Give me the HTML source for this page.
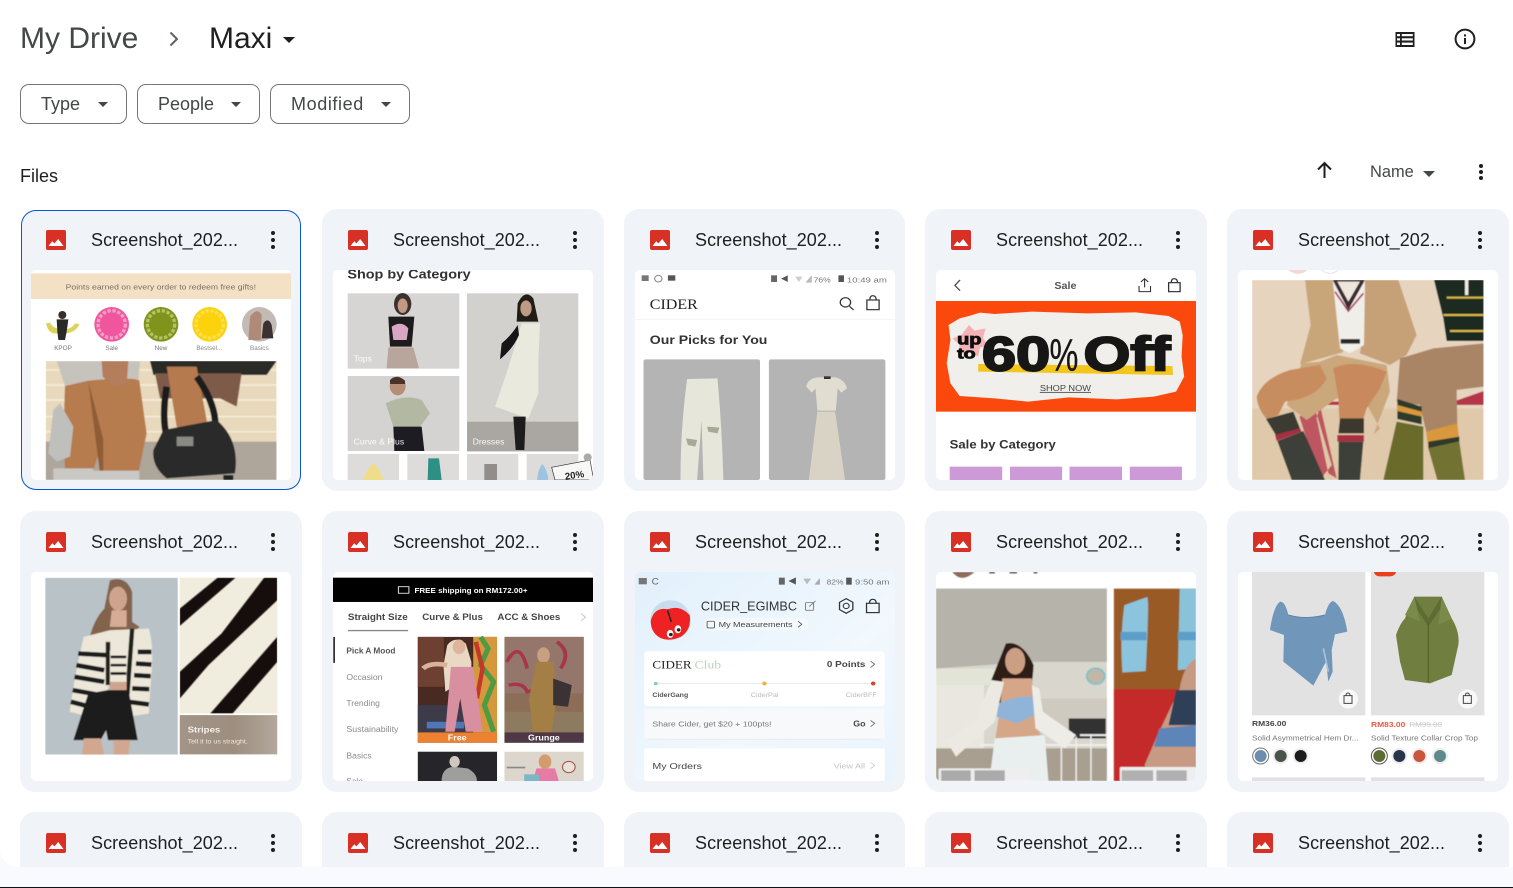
<!DOCTYPE html>
<html lang="en"><head><meta charset="utf-8"><title>Maxi - Google Drive</title>
<style>
html,body{margin:0;padding:0;width:1513px;height:888px;overflow:hidden;background:#f8fafd;font-family:"Liberation Sans",sans-serif}
#main{position:absolute;left:0;top:0;width:1513px;height:867px;background:#fff;overflow:hidden;border-bottom-left-radius:18px}
#line{position:absolute;left:0;top:887px;width:1513px;height:1px;background:#111}
.a{position:absolute;white-space:nowrap}
.chip{position:absolute;top:84px;height:38px;border:1px solid #747775;border-radius:9px;color:#444746;font-size:18px;line-height:38px;box-sizing:content-box}
.chip span{position:absolute;left:20px;top:0}
.tri{position:absolute;width:0;height:0;border-left:5px solid transparent;border-right:5px solid transparent;border-top:5px solid #444746}
.card{position:absolute;width:282px;height:282px;background:#f0f4f9;border-radius:15px;overflow:hidden}
.card.sel{box-shadow:inset 0 0 0 1px #0b57d0;left:21px!important;width:280px;margin-top:1px;height:280px}
.card b{position:absolute;left:71px;top:20px;font-weight:400;font-size:18px;line-height:22px;color:#1f1f1f;letter-spacing:.06px;white-space:nowrap}
.card.sel b{left:70px;top:19px}
.card .ic{position:absolute;left:26px;top:21px;width:20px;height:20px}
.card.sel .ic{left:25px;top:20px}
.card .kb{position:absolute;left:251px;top:21px;width:4px;height:20px}
.card.sel .kb{left:250px;top:20px}
.th{position:absolute;left:11px;top:61px;width:260px;height:210px;background:#fff;border-radius:5px;overflow:hidden}
.card.sel .th{left:10px;top:60px}
.r2{height:281px}
.r3{height:55px;border-radius:15px 15px 0 0}
.r2 .th{height:209px}
.th>svg{display:block;width:100%;height:100%}
svg text{font-family:"Liberation Sans",sans-serif}
</style></head><body>
<svg width="0" height="0" style="position:absolute"><defs>
<symbol id="img" viewBox="0 0 20 20"><rect width="20" height="20" rx="2" fill="#d93025"/><path d="M2.5 16 L6.2 11.2 L8.4 13.4 L12.2 9 L17.5 16Z" fill="#fff"/></symbol>
<symbol id="kb" viewBox="0 0 4 20"><circle cx="2" cy="3" r="2" fill="#1f1f1f"/><circle cx="2" cy="10" r="2" fill="#1f1f1f"/><circle cx="2" cy="17" r="2" fill="#1f1f1f"/></symbol>
<filter id="b" x="-5%" y="-5%" width="110%" height="110%"><feGaussianBlur stdDeviation="1.6"/></filter>
<filter id="t" x="-5%" y="-5%" width="110%" height="110%"><feGaussianBlur stdDeviation=".7"/></filter>
<linearGradient id="gs" x1="0" x2="1"><stop offset="0" stop-color="#a29486"/><stop offset=".55" stop-color="#9d8e80"/><stop offset="1" stop-color="#b2a89c"/></linearGradient>
<linearGradient id="gp" x1="0" y1="0" x2="1" y2="1"><stop offset="0" stop-color="#e2f0fb"/><stop offset=".6" stop-color="#f1f8fe"/><stop offset="1" stop-color="#eaf4fd"/></linearGradient>
</defs></svg>

<div id="main">
<div class="a" style="left:20px;top:21px;font-size:30px;line-height:36px;color:#444746">My Drive</div>
<svg class="a" style="left:166px;top:29px" width="16" height="20" viewBox="0 0 16 20"><path d="M4.5 3.5 L11 10 L4.5 16.5" fill="none" stroke="#5f6368" stroke-width="2"/></svg>
<div class="a" style="left:209px;top:21px;font-size:30px;line-height:36px;color:#1f1f1f">Maxi</div>
<div class="tri" style="left:283px;top:37px;border-left-width:6px;border-right-width:6px;border-top:6px solid #1f1f1f"></div>

<svg class="a" style="left:1395px;top:31px" width="20" height="16" viewBox="0 0 20 16"><rect x=".5" y="1" width="19" height="15" fill="#1f1f1f"/><rect x="2" y="3" width="3" height="2.2" fill="#fff"/><rect x="2" y="7.3" width="3" height="2.2" fill="#fff"/><rect x="2" y="11.6" width="3" height="2.4" fill="#fff"/><rect x="6.8" y="3" width="11" height="2.2" fill="#fff"/><rect x="6.8" y="7.3" width="11" height="2.2" fill="#fff"/><rect x="6.8" y="11.6" width="11" height="2.4" fill="#fff"/></svg>
<svg class="a" style="left:1454px;top:28px" width="22" height="22" viewBox="0 0 22 22"><circle cx="11" cy="11" r="9.4" fill="none" stroke="#1f1f1f" stroke-width="2"/><rect x="10" y="10" width="2" height="6" fill="#1f1f1f"/><rect x="10" y="6.4" width="2" height="2" fill="#1f1f1f"/></svg>

<div class="chip" style="left:20px;width:105px"><span>Type</span><i class="tri" style="left:77px;top:17px"></i></div>
<div class="chip" style="left:137px;width:121px"><span>People</span><i class="tri" style="left:93px;top:17px"></i></div>
<div class="chip" style="left:270px;width:138px"><span style="letter-spacing:.6px">Modified</span><i class="tri" style="left:110px;top:17px"></i></div>

<div class="a" style="left:20px;top:165px;font-size:18px;line-height:22px;color:#1f1f1f">Files</div>
<svg class="a" style="left:1316px;top:161px" width="17" height="18" viewBox="0 0 17 18"><path d="M8.5 17 V2 M2 8.5 L8.5 2 L15 8.5" fill="none" stroke="#1f1f1f" stroke-width="2"/></svg>
<div class="a" style="left:1370px;top:162px;font-size:16.4px;line-height:20px;color:#444746">Name</div>
<div class="tri" style="left:1423px;top:171px;border-left-width:6px;border-right-width:6px;border-top:6px solid #444746"></div>
<svg class="a" style="left:1479px;top:163px;width:4px;height:18px"><circle cx="2" cy="3" r="2" fill="#1f1f1f"/><circle cx="2" cy="9" r="2" fill="#1f1f1f"/><circle cx="2" cy="15" r="2" fill="#1f1f1f"/></svg>

<!-- ROW 1 -->
<div class="card sel" style="left:20px;top:209px"><svg class="ic"><use href="#img"/></svg><b>Screenshot_202...</b><svg class="kb"><use href="#kb"/></svg>
<div class="th"><svg viewBox="33 30 780 630" preserveAspectRatio="none">
<rect x="33" y="40" width="780" height="77" fill="#f3e0c5"/>
<g filter="url(#t)">
<text x="137" y="88" font-size="22" fill="#7a6f66" textLength="571" lengthAdjust="spacingAndGlyphs">Points earned on every order to redeem free gifts!</text>
<path d="M78 190 Q85 225 115 220 L140 220 Q170 215 178 192 L165 190 Q155 208 130 208 Q100 208 90 188Z" fill="#dcd35a"/>
<circle cx="127" cy="165" r="12" fill="#3a2f2a"/><path d="M110 178 H145 L140 215 L135 240 H115 L112 215Z" fill="#2c2a26"/>
<circle cx="275" cy="193" r="52" fill="#f0569e"/><circle cx="275" cy="193" r="41" fill="none" stroke="#fbd0e3" stroke-width="10" stroke-dasharray="10 5" opacity=".6"/>
<circle cx="423" cy="193" r="52" fill="#80941a"/><circle cx="423" cy="193" r="41" fill="none" stroke="#dfe6a8" stroke-width="10" stroke-dasharray="10 5" opacity=".55"/>
<circle cx="569" cy="193" r="52" fill="#fcd20a"/><circle cx="569" cy="193" r="41" fill="none" stroke="#fde97a" stroke-width="10" stroke-dasharray="10 5" opacity=".6"/>
<circle cx="718" cy="193" r="52" fill="#c3bab6"/><path d="M690 170 Q712 140 725 165 L722 240 H685Z" fill="#b08a78"/><path d="M730 190 Q745 170 755 195 L760 235 H725Z" fill="#3d3230"/>
<text x="129" y="270" font-size="19" fill="#777" text-anchor="middle">KPOP</text>
<text x="275" y="270" font-size="19" fill="#777" text-anchor="middle">Sale</text>
<text x="423" y="270" font-size="19" fill="#777" text-anchor="middle">New</text>
<text x="568" y="270" font-size="19" fill="#888" text-anchor="middle">Bestsel...</text>
<text x="718" y="270" font-size="19" fill="#888" text-anchor="middle">Basics</text>
</g>
<svg x="77" y="303" width="693" height="357" viewBox="77 303 693 357">
<g filter="url(#b)">
<rect x="77" y="303" width="693" height="357" fill="#e8d8bc"/>
<path d="M77 330H770M77 375H770M77 420H770M77 470H770M77 515H770" stroke="#f5ecd8" stroke-width="5"/>
<rect x="77" y="545" width="693" height="115" fill="#aea69a"/>
<path d="M110 303 H360 L355 365 Q280 355 205 365 L135 378Z" fill="#c6c3bd"/>
<path d="M135 378 L205 362 Q340 350 358 362 L380 520 L355 640 H250 L250 540 L220 630 H135 Q130 480 135 378Z" fill="#b67b4e"/>
<path d="M205 365 L240 640 L250 640 L250 540Z" fill="#8f5b36"/>
<path d="M245 303 H325 L320 375 L280 378 L248 350Z" fill="#b47d5b"/>
<path d="M100 625 H220 V660 H100Z M220 632 H358 V660 H220Z" fill="#c9c8c4"/>
<path d="M100 450 L120 430 L160 500 L150 590 L110 605 L85 580Z" fill="#bfbfbc"/>
<path d="M390 303 H770 L740 345 H400Z" fill="#2a2a28"/>
<path d="M405 340 H665 L650 440 L600 415 H420Z" fill="#7e5a48"/>
<path d="M440 320 H530 L560 480 Q565 530 500 520 L470 500Z" fill="#b57a4d"/>
<path d="M440 380 Q425 470 440 530 M530 350 Q595 440 585 520" fill="none" stroke="#1e1e1c" stroke-width="20"/>
<path d="M430 510 L590 480 Q660 540 645 640 L440 655 Q395 620 400 570Z" fill="#2a2b2a"/>
<rect x="470" y="530" width="50" height="28" fill="#8a8a84"/>
<rect x="610" y="645" width="30" height="15" fill="#222"/>
</g></svg>
</svg></div></div>

<div class="card" style="left:322px;top:209px"><svg class="ic"><use href="#img"/></svg><b>Screenshot_202...</b><svg class="kb"><use href="#kb"/></svg>
<div class="th"><svg viewBox="24 30 780 630" preserveAspectRatio="none"><g filter="url(#t)">
<text x="67" y="55" font-size="40" font-weight="700" fill="#333" textLength="370" lengthAdjust="spacingAndGlyphs">Shop by Category</text>
<rect x="68" y="100" width="335" height="226" fill="#d7d5d3"/><rect x="68" y="348" width="335" height="225" fill="#d5d3d1"/><rect x="426" y="100" width="334" height="474" fill="#d3d1ce"/><rect x="426" y="485" width="334" height="89" fill="#aaa7a2"/>
<rect x="68" y="582" width="154" height="78" fill="#dddcda"/><rect x="247" y="582" width="155" height="78" fill="#dddcda"/><rect x="426" y="582" width="154" height="78" fill="#dddcda"/><rect x="605" y="582" width="155" height="78" fill="#dddcda"/>
<ellipse cx="233" cy="132" rx="26" ry="33" fill="#3a322d"/><ellipse cx="233" cy="137" rx="15" ry="22" fill="#c29a84"/>
<path d="M190 170 H268 L260 260 H195Z" fill="#1f1d1d"/><path d="M200 200 Q230 180 250 205 L245 240 H205Z" fill="#d9a7c4"/><path d="M190 262 H265 L282 325 H185Z" fill="#b8a59c"/>
<ellipse cx="218" cy="378" rx="24" ry="28" fill="#b58e78"/><path d="M195 360 Q215 340 240 362 L240 372 H195Z" fill="#4a3328"/>
<path d="M182 430 Q240 400 290 420 L315 460 L285 500 H205Z" fill="#b3b8a3"/><path d="M205 500 H290 L298 573 H208Z" fill="#1f1f23"/>
<path d="M578 130 Q600 85 625 115 L640 185 H575Z" fill="#211a18"/><ellipse cx="603" cy="145" rx="17" ry="24" fill="#bf9a85"/>
<path d="M590 190 H645 L640 300 L640 400 L610 475 L510 440 Q545 340 560 290Z" fill="#e9e9dd"/>
<path d="M578 195 Q560 225 530 250 L525 298 Q565 265 582 225Z" fill="#141414"/>
<path d="M565 470 H602 L598 570 H572Z" fill="#1c1c1c"/>
<text x="86" y="305" font-size="26" fill="#fff" opacity=".9">Tops</text><text x="86" y="553" font-size="26" fill="#fff" opacity=".9">Curve &amp; Plus</text><text x="443" y="553" font-size="26" fill="#fff" opacity=".9">Dresses</text>
<path d="M115 660 Q125 625 145 610 Q165 625 175 660Z" fill="#f0dd8c"/><path d="M310 595 H342 L350 660 H308Z" fill="#2f8f85"/><rect x="478" y="612" width="38" height="48" fill="#908d8a"/><path d="M636 660 Q640 625 652 612 Q668 630 670 660Z" fill="#9cc4e0"/>
<path d="M680 622 L795 600 L806 660 H690Z" fill="#f7f7f5" stroke="#333" stroke-width="2"/><circle cx="788" cy="592" r="12" fill="#aaa"/>
<text x="720" y="655" font-size="29" font-weight="700" fill="#222" transform="rotate(-8 750 650)">20%</text>
</g></svg></div></div>

<div class="card" style="left:624px;top:209px;width:281px"><svg class="ic"><use href="#img"/></svg><b>Screenshot_202...</b><svg class="kb"><use href="#kb"/></svg>
<div class="th"><svg viewBox="27 30 703 630" preserveAspectRatio="none"><g filter="url(#t)">
<rect x="45" y="46" width="19" height="17" fill="#777"/><circle cx="90" cy="56" r="10" fill="none" stroke="#888" stroke-width="3"/><rect x="116" y="46" width="20" height="16" fill="#555"/>
<rect x="395" y="46" width="16" height="20" fill="#666"/><path d="M422 56 L440 46 V66Z" fill="#555"/><path d="M460 50 H480 L470 66Z" fill="#ccc"/><path d="M488 68 L505 45 V68Z" fill="#bbb"/>
<text x="510" y="67" font-size="23" fill="#777">76%</text><rect x="577" y="46" width="15" height="20" fill="#555"/><text x="600" y="67" font-size="23" fill="#777" textLength="108" lengthAdjust="spacingAndGlyphs">10:49 am</text>
<text x="67" y="147" font-size="43" fill="#222" style="font-family:'Liberation Serif',serif" textLength="130" lengthAdjust="spacingAndGlyphs">CIDER</text>
<circle cx="596" cy="127" r="14" fill="none" stroke="#333" stroke-width="3.5"/><path d="M607 139 L618 150" stroke="#333" stroke-width="3.5"/>
<rect x="654" y="120" width="33" height="29" fill="none" stroke="#333" stroke-width="3.5"/><path d="M662 120 Q662 107 670 107 Q679 107 679 120" fill="none" stroke="#333" stroke-width="3.5"/>
<rect x="27" y="177" width="703" height="2" fill="#eee"/>
<text x="67" y="252" font-size="37" font-weight="700" fill="#333" textLength="318" lengthAdjust="spacingAndGlyphs">Our Picks for You</text>
<rect x="50" y="298" width="315" height="362" rx="6" fill="#b4b4b4"/><rect x="389" y="298" width="315" height="362" rx="6" fill="#b4b4b4"/>
<path d="M168 357 L250 355 Q262 500 266 660 H212 L207 480 L195 660 H150 Q150 500 168 357Z" fill="#e7e6da"/>
<path d="M165 535 L195 540 L190 560 L170 555Z M222 500 L255 503 L250 520 L225 515Z" fill="#a9a795"/>
<path d="M490 380 Q495 355 520 352 L570 352 Q595 360 600 385 L585 398 L575 385 L570 452 H520 L515 385 L505 398Z" fill="#e2ddd1"/>
<path d="M520 455 H568 L595 660 H497Z" fill="#d9d3c6"/><rect x="538" y="349" width="18" height="8" fill="#333"/>
</g></svg></div></div>

<div class="card" style="left:925px;top:209px"><svg class="ic"><use href="#img"/></svg><b>Screenshot_202...</b><svg class="kb"><use href="#kb"/></svg>
<div class="th"><svg viewBox="841 30 703 630" preserveAspectRatio="none"><g filter="url(#t)">
<path d="M906 60 L892 76 L906 92" fill="none" stroke="#444" stroke-width="3.5"/>
<text x="1191" y="87" font-size="29" font-weight="700" fill="#555" text-anchor="middle">Sale</text>
<path d="M1405 57 V82 M1395 66 L1405 56 L1415 66 M1390 78 V95 H1421 V78" fill="none" stroke="#333" stroke-width="3"/>
<rect x="1470" y="68" width="31" height="27" fill="none" stroke="#333" stroke-width="3.5"/><path d="M1477 68 Q1477 56 1485 56 Q1494 56 1494 68" fill="none" stroke="#333" stroke-width="3.5"/>
<rect x="841" y="123" width="703" height="332" fill="#fb4a0b"/>
<path d="M905 175 L930 168 L960 158 L1000 162 L1100 155 L1250 160 L1380 157 L1470 168 L1500 185 L1508 225 L1505 290 L1512 350 L1490 395 L1430 410 L1330 418 L1200 412 L1090 425 L1000 415 L905 408 L880 370 L870 310 L880 240 L875 195Z" fill="#f1efeb"/>
<path d="M955 312 L1480 318 L1482 345 L955 335Z" fill="#f4c51c"/>
<path d="M930 195 L945 212 L975 205 L968 235 L985 258 L960 262 L955 290 L930 275 L900 285 L905 255 L885 235 L910 225Z" fill="#f4b2b6"/>
<text x="898" y="253" font-size="46" font-weight="700" fill="#111" textLength="66" lengthAdjust="spacingAndGlyphs" stroke="#111" stroke-width="2.5">up</text>
<text x="898" y="296" font-size="44" font-weight="700" fill="#111" textLength="50" lengthAdjust="spacingAndGlyphs" stroke="#111" stroke-width="2.5">to</text>
<text x="965" y="332" font-size="145" font-weight="700" fill="#161412" stroke="#161412" stroke-width="6" textLength="185" lengthAdjust="spacingAndGlyphs">60</text>
<text x="1148" y="332" font-size="135" fill="#161412" stroke="#161412" stroke-width="1" textLength="78" lengthAdjust="spacingAndGlyphs">%</text>
<text x="1240" y="332" font-size="145" font-weight="700" fill="#161412" stroke="#161412" stroke-width="6" textLength="235" lengthAdjust="spacingAndGlyphs">Off</text>
<text x="1191" y="393" font-size="25" fill="#444" text-anchor="middle" text-decoration="underline">SHOP NOW</text>
<text x="878" y="566" font-size="35" font-weight="700" fill="#333" textLength="287" lengthAdjust="spacingAndGlyphs">Sale by Category</text>
<g fill="#cc9ad6"><rect x="878" y="620" width="142" height="40"/><rect x="1041" y="620" width="141" height="40"/><rect x="1202" y="620" width="142" height="40"/><rect x="1365" y="620" width="141" height="40"/></g>
</g></svg></div></div>

<div class="card" style="left:1227px;top:209px"><svg class="ic"><use href="#img"/></svg><b>Screenshot_202...</b><svg class="kb"><use href="#kb"/></svg>
<div class="th"><svg viewBox="54 15 780 630" preserveAspectRatio="none">
<path d="M205 15 Q235 38 262 15Z" fill="#f0d9d2"/><path d="M305 15 Q330 35 355 15" fill="none" stroke="#e5e5e5" stroke-width="3"/>
<svg x="96" y="45" width="695" height="600" viewBox="96 45 695 600"><g filter="url(#b)">
<rect x="96" y="45" width="695" height="600" fill="#e6d4bf"/><rect x="96" y="430" width="695" height="215" fill="#dfc9aa"/>
<path d="M300 420 L350 640 L325 625 L290 460Z M238 455 L300 645 L335 600 L285 430Z" fill="#bd5660"/>
<path d="M300 410 H470 L460 420 H310Z M700 410 L791 378 V420 H710Z" fill="#b53448"/>
<path d="M255 45 H340 L378 200 L368 262 L240 298 L272 180Z" fill="#c9a67a"/>
<path d="M432 45 H535 L590 210 L560 270 L510 300 L420 265 L432 180Z" fill="#c6a177"/>
<path d="M338 45 H435 L432 240 L390 265 L360 250Z" fill="#f0eee8"/>
<path d="M338 45 L385 135 L435 45" fill="#3a2a30"/><path d="M352 50 L385 110 L420 50" fill="#efe7dc"/><path d="M345 80 L385 138 L430 85" fill="none" stroke="#a5385a" stroke-width="5"/>
<rect x="362" y="222" width="58" height="14" fill="#2a2622"/>
<path d="M245 295 L300 290 L350 270 L500 300 L510 380 L460 510 L480 490 L430 400 L350 400 L260 465 L200 420Z" fill="#cba77c"/>
<path d="M110 395 Q130 340 210 315 L300 300 L320 340 Q290 400 195 410 L175 450 L140 462 Q112 430 110 395Z" fill="#c88d5e"/>
<path d="M340 310 Q400 280 500 320 L480 370 L440 430 L430 462 L358 462 L355 400Z" fill="#c88a5c"/>
<path d="M138 462 L220 440 L240 490 L172 518Z" fill="#3a3a30"/><path d="M165 510 L240 490 L245 500 L170 528Z" fill="#a82d43"/>
<path d="M172 528 L250 498 L315 645 H215Z" fill="#3d3f38"/>
<path d="M360 460 H432 V505 H355Z" fill="#3c382e"/><path d="M352 510 H432 V530 H352Z" fill="#a82d43"/><path d="M356 530 H430 L420 645 H355Z" fill="#3c3f38"/>
<path d="M540 280 L640 250 L791 235 V365 L710 375 L712 480 L620 505 L600 420 L530 410Z" fill="#a98566"/>
<path d="M642 45 H791 V228 L680 228 L670 160Z" fill="#1d2a22"/><path d="M680 98 H791 M670 150 H791 M690 198 H791" stroke="#d9b746" stroke-width="6"/><path d="M740 45 V90" stroke="#f0ece0" stroke-width="10"/>
<path d="M532 402 L605 425 V478 L532 462Z" fill="#2e3a2c"/><path d="M532 420 L605 440 V455 L532 438Z" fill="#d9983c"/>
<path d="M530 470 L610 485 L610 645 H490Z" fill="#6b6b2c"/>
<path d="M618 500 L712 475 L718 525 L625 550Z" fill="#d9983c"/><path d="M625 530 L718 515 V530 L625 550Z" fill="#2e3a2c"/>
<path d="M625 550 L718 530 L735 645 H652Z" fill="#727230"/>
</g></svg></svg></div></div>

<!-- ROW 2 -->
<div class="card r2" style="left:20px;top:511px"><svg class="ic"><use href="#img"/></svg><b>Screenshot_202...</b><svg class="kb"><use href="#kb"/></svg>
<div class="th"><svg viewBox="28 20 699 628" preserveAspectRatio="none">
<svg x="66" y="37" width="357" height="532" viewBox="66 37 357 532"><g filter="url(#b)">
<rect x="66" y="37" width="357" height="532" fill="#b9c2c7"/>
<path d="M240 45 Q285 30 300 80 Q300 130 300 170 L320 185 L290 215 L260 200 Q215 270 180 250 Q190 170 225 130Z" fill="#84634e"/>
<ellipse cx="262" cy="100" rx="24" ry="36" fill="#cfa48e"/><path d="M245 135 H285 V185 H240Z" fill="#d7ac95"/>
<path d="M170 215 L240 195 L345 190 Q360 250 350 350 L345 445 L290 455 L285 360 L240 360 L220 400 L200 460 L132 440 Q150 300 170 215Z" fill="#ece7d8"/>
<path d="M155 265 L235 270 M150 300 L225 315 M145 335 L225 350 M140 375 L215 390 M135 410 L205 430 M315 260 L352 260 M310 295 L352 298 M305 330 L350 333 M300 370 L346 372 M290 410 L345 418" stroke="#1e1e1c" stroke-width="14" fill="none"/>
<path d="M235 230 L235 360 M300 190 L285 420" stroke="#24241f" stroke-width="12" fill="none"/>
<rect x="240" y="255" width="45" height="100" fill="#ece7d8"/><path d="M242 275 H284 M242 300 H284 M242 325 H284" stroke="#1e1e1c" stroke-width="8"/>
<rect x="240" y="350" width="45" height="28" fill="#cfa48e"/>
<path d="M182 385 L235 375 H290 L315 525 H235 L230 495 L215 525 H142Z" fill="#1e1d1f"/>
<path d="M170 520 H215 L225 569 H165Z M250 525 H295 L290 569 H250Z" fill="#d1a88f"/>
</g></svg>
<rect x="428" y="37" width="262" height="408" fill="#f1edde"/>
<svg x="428" y="37" width="262" height="408" viewBox="428 37 262 408"><g filter="url(#b)">
<path d="M530 37 H578 L428 182 V130Z" fill="#121110"/>
<path d="M655 37 H690 V105 L505 300 L428 400 V320 L540 205Z" fill="#121110"/>
<path d="M690 215 V290 L570 445 H510Z" fill="#121110"/>
</g></svg>
<rect x="428" y="450" width="262" height="118" fill="url(#gs)"/>
<g filter="url(#t)"><text x="449" y="503" font-size="26" font-weight="700" fill="#f5f2ee">Stripes</text><text x="449" y="536" font-size="19" fill="#ece8e2" textLength="162" lengthAdjust="spacingAndGlyphs">Tell it to us straight.</text></g>
</svg></div></div>

<div class="card r2" style="left:322px;top:511px"><svg class="ic"><use href="#img"/></svg><b>Screenshot_202...</b><svg class="kb"><use href="#kb"/></svg>
<div class="th"><svg viewBox="838 20 699 628" preserveAspectRatio="none"><g filter="url(#t)">
<rect x="838" y="37" width="699" height="73" fill="#000"/>
<rect x="1014" y="64" width="28" height="20" fill="none" stroke="#ccc" stroke-width="3"/>
<text x="1057" y="83" font-size="23" font-weight="700" fill="#fff" textLength="304" lengthAdjust="spacingAndGlyphs">FREE shipping on RM172.00+</text>
<text x="878" y="165" font-size="28" font-weight="700" fill="#444" textLength="161" lengthAdjust="spacingAndGlyphs">Straight Size</text>
<text x="1078" y="165" font-size="28" font-weight="700" fill="#444" textLength="163" lengthAdjust="spacingAndGlyphs">Curve &amp; Plus</text>
<text x="1280" y="165" font-size="28" font-weight="700" fill="#444" textLength="169" lengthAdjust="spacingAndGlyphs">ACC &amp; Shoes</text>
<path d="M1505 145 L1517 156 L1505 167" fill="none" stroke="#ccc" stroke-width="3"/>
<rect x="878" y="194" width="162" height="4" fill="#888"/>
<rect x="839" y="215" width="4" height="78" fill="#111"/>
<text x="874" y="265" font-size="24" font-weight="700" fill="#555" textLength="132" lengthAdjust="spacingAndGlyphs">Pick A Mood</text>
<g font-size="24" fill="#8a8a8a"><text x="874" y="344" textLength="97" lengthAdjust="spacingAndGlyphs">Occasion</text><text x="874" y="422" textLength="90" lengthAdjust="spacingAndGlyphs">Trending</text><text x="874" y="501" textLength="140" lengthAdjust="spacingAndGlyphs">Sustainability</text><text x="874" y="580" textLength="68" lengthAdjust="spacingAndGlyphs">Basics</text><text x="874" y="657" textLength="44" lengthAdjust="spacingAndGlyphs">Sale</text></g>
<rect x="1066" y="215" width="213" height="318" fill="#4a2a22"/>
<rect x="1066" y="215" width="70" height="150" fill="#6d4033"/><rect x="1215" y="215" width="64" height="287" fill="#d6983e"/>
<path d="M1235 215 L1255 250 L1235 300 L1270 350 L1245 420 L1270 500" fill="none" stroke="#4f9a42" stroke-width="14"/><path d="M1222 230 L1240 310 L1225 400" fill="none" stroke="#c4382a" stroke-width="12"/>
<rect x="1066" y="420" width="130" height="82" fill="#3c3b48"/><rect x="1090" y="470" width="100" height="20" fill="#5077b8"/>
<path d="M1145 240 Q1165 210 1195 235 L1210 290 L1210 330 L1140 380 L1135 300Z" fill="#e8d8c4"/><ellipse cx="1177" cy="245" rx="17" ry="22" fill="#dcb59a"/>
<path d="M1155 305 L1215 305 L1240 500 H1195 L1180 400 L1165 500 H1140Z" fill="#d88fa0"/>
<path d="M1145 300 Q1100 290 1080 310" stroke="#d8b398" stroke-width="14" fill="none"/>
<rect x="1066" y="502" width="213" height="31" fill="#ed8132"/><text x="1172" y="527" font-size="24" font-weight="700" fill="#fff" text-anchor="middle">Free</text>
<rect x="1299" y="215" width="213" height="318" fill="#8b6d58"/><rect x="1299" y="215" width="213" height="170" fill="#94776a"/>
<path d="M1305 290 Q1340 220 1360 310 M1440 230 Q1480 260 1450 310 M1310 360 Q1350 350 1360 380 Q1400 370 1380 350" fill="none" stroke="#a8344a" stroke-width="10"/>
<rect x="1299" y="440" width="213" height="62" fill="#8d7a5e"/>
<ellipse cx="1404" cy="270" rx="17" ry="24" fill="#c6a081"/><path d="M1385 290 H1430 L1440 400 L1425 502 H1375 L1365 400Z" fill="#a37e45"/><path d="M1430 340 L1480 360 L1470 425 L1430 420Z" fill="#3b3034"/>
<rect x="1299" y="502" width="213" height="31" fill="#4f3745"/><text x="1405" y="527" font-size="24" font-weight="700" fill="#fff" text-anchor="middle">Grunge</text>
<rect x="1066" y="560" width="213" height="88" fill="#26262a"/><path d="M1130 648 Q1130 610 1160 605 L1200 610 Q1225 625 1225 648Z" fill="#9e9e9c"/><ellipse cx="1165" cy="590" rx="14" ry="17" fill="#cfc7c0"/>
<rect x="1299" y="560" width="213" height="88" fill="#dcd6cd"/><path d="M1375 648 L1385 610 H1435 L1445 648Z" fill="#e67ca6"/><ellipse cx="1408" cy="590" rx="17" ry="22" fill="#d49c6e"/><circle cx="1472" cy="606" r="17" fill="#e8e2da" stroke="#a3533f" stroke-width="3"/>
<rect x="1305" y="605" width="50" height="5" fill="#888"/><rect x="1352" y="628" width="40" height="20" fill="#7db6c4"/>
</g></svg></div></div>

<div class="card r2" style="left:624px;top:511px;width:281px"><svg class="ic"><use href="#img"/></svg><b>Screenshot_202...</b><svg class="kb"><use href="#kb"/></svg>
<div class="th"><svg viewBox="27 20 703 628" preserveAspectRatio="none"><rect x="27" y="20" width="703" height="628" fill="url(#gp)"/><g filter="url(#t)">
<rect x="37" y="38" width="22" height="19" fill="#777"/><text x="72" y="58" font-size="27" fill="#666">C</text>
<rect x="416" y="37" width="16" height="21" fill="#666"/><path d="M442 47 L462 36 V58Z" fill="#555"/><path d="M482 40 H503 L492 57Z" fill="#bbb"/><path d="M512 58 L527 38 V58Z" fill="#aaa"/>
<text x="545" y="58" font-size="23" fill="#777">82%</text><rect x="598" y="37" width="15" height="21" fill="#555"/><text x="622" y="58" font-size="23" fill="#777" textLength="93" lengthAdjust="spacingAndGlyphs">9:50 am</text>
<ellipse cx="123" cy="165" rx="55" ry="60" fill="#c8dcee"/>
<path d="M70 165 Q80 125 115 132 Q150 118 175 150 Q180 195 150 215 Q120 230 95 218 Q68 200 70 165Z" fill="#ee2020"/>
<path d="M115 135 L125 170" stroke="#222" stroke-width="4"/>
<ellipse cx="122" cy="206" rx="9" ry="12" fill="#fff"/><ellipse cx="143" cy="192" rx="9" ry="12" fill="#fff"/><circle cx="124" cy="208" r="5" fill="#222"/><circle cx="145" cy="194" r="5" fill="#222"/>
<text x="205" y="136" font-size="38" fill="#333" textLength="260" lengthAdjust="spacingAndGlyphs">CIDER_EGIMBC</text>
<rect x="488" y="112" width="22" height="23" fill="none" stroke="#777" stroke-width="2.5" rx="2"/><path d="M498 124 L515 107" stroke="#777" stroke-width="2.5"/>
<path d="M598 100 L616 111 V133 L598 144 L580 133 V111Z" fill="none" stroke="#333" stroke-width="3.5"/><circle cx="598" cy="122" r="8" fill="none" stroke="#333" stroke-width="3"/>
<rect x="653" y="114" width="34" height="28" fill="none" stroke="#333" stroke-width="3.5"/><path d="M661 114 Q661 102 670 102 Q679 102 679 114" fill="none" stroke="#333" stroke-width="3.5"/>
<rect x="215" y="157" width="280" height="40" rx="20" fill="#f4f9fe"/><rect x="222" y="168" width="20" height="20" rx="3" fill="none" stroke="#555" stroke-width="2.5"/>
<text x="253" y="186" font-size="22" fill="#444" textLength="200" lengthAdjust="spacingAndGlyphs">My Measurements</text><path d="M468 168 L478 177 L468 186" fill="none" stroke="#555" stroke-width="2.5"/>
<rect x="52" y="258" width="650" height="165" rx="10" fill="#fff"/>
<text x="74" y="310" font-size="36" fill="#222" style="font-family:'Liberation Serif',serif" textLength="106" lengthAdjust="spacingAndGlyphs">CIDER</text>
<text x="188" y="310" font-size="36" fill="#b8d4bc" style="font-family:'Liberation Serif',serif" textLength="72" lengthAdjust="spacingAndGlyphs">Club</text>
<text x="546" y="306" font-size="25" font-weight="700" fill="#444" textLength="104" lengthAdjust="spacingAndGlyphs">0 Points</text><path d="M664 288 L675 297 L664 307" fill="none" stroke="#666" stroke-width="2.5"/>
<rect x="82" y="354" width="590" height="2" fill="#e0e0e0"/><circle cx="83" cy="355" r="5" fill="#7cc9c9"/><circle cx="377" cy="355" r="6" fill="#eeb53c"/><circle cx="671" cy="355" r="6" fill="#d9402c"/>
<text x="74" y="395" font-size="18" font-weight="700" fill="#555" textLength="97" lengthAdjust="spacingAndGlyphs">CiderGang</text><text x="340" y="395" font-size="18" fill="#bbb" textLength="75" lengthAdjust="spacingAndGlyphs">CiderPal</text><text x="597" y="395" font-size="18" fill="#bbb" textLength="84" lengthAdjust="spacingAndGlyphs">CiderBFF</text>
<rect x="52" y="432" width="650" height="88" fill="#f8f9fa"/>
<text x="74" y="484" font-size="23" fill="#777" textLength="322" lengthAdjust="spacingAndGlyphs">Share Cider, get $20 + 100pts!</text><text x="617" y="484" font-size="24" font-weight="700" fill="#444">Go</text><path d="M664 466 L675 475 L664 485" fill="none" stroke="#666" stroke-width="2.5"/>
<rect x="60" y="522" width="630" height="2" fill="#e8e9ea"/>
<rect x="52" y="550" width="650" height="98" fill="#fff"/>
<text x="74" y="612" font-size="26" fill="#444" textLength="134" lengthAdjust="spacingAndGlyphs">My Orders</text><text x="564" y="610" font-size="23" fill="#c4c4c4" textLength="85" lengthAdjust="spacingAndGlyphs">View All</text><path d="M664 592 L675 601 L664 611" fill="none" stroke="#ccc" stroke-width="2.5"/>
</g></svg></div></div>

<div class="card r2" style="left:925px;top:511px"><svg class="ic"><use href="#img"/></svg><b>Screenshot_202...</b><svg class="kb"><use href="#kb"/></svg>
<div class="th"><svg viewBox="841 20 703 628" preserveAspectRatio="none"><g filter="url(#b)">
<path d="M885 20 Q910 55 945 20Z" fill="#8d6a5c"/><path d="M985 22 H1000 M1040 22 H1060 M1105 22 H1115" stroke="#444" stroke-width="4"/>
<rect x="841" y="70" width="462" height="578" fill="#d9d6ce"/>
<path d="M841 70 H1303 V290 L1100 290 L841 310Z" fill="#b6b3ab"/>
<rect x="841" y="310" width="200" height="50" fill="#e2e4d6"/><rect x="841" y="360" width="130" height="190" fill="#eae7e0"/>
<rect x="1120" y="400" width="183" height="110" fill="#cfcac0"/><rect x="1200" y="460" width="100" height="60" fill="#333"/>
<circle cx="1273" cy="333" r="24" fill="#c2b6a8" stroke="#79c3ca" stroke-width="5"/>
<path d="M841 550 H1303 V648 H841Z" fill="#a89f90"/><path d="M960 540 H1303 M1230 510 H1303" stroke="#eee" stroke-width="6"/><path d="M1180 520 V648 M1220 515 V648 M1260 510 V648" stroke="#eee" stroke-width="4"/>
<path d="M1030 235 Q1075 225 1105 300 Q1100 400 1075 420 L990 435 L985 360Z" fill="#2e1f18"/>
<ellipse cx="1055" cy="288" rx="27" ry="40" fill="#ca9f84"/>
<path d="M1020 340 L1100 340 L1120 500 L1130 530 H1000 L1015 430Z" fill="#d5a688"/>
<path d="M1010 415 Q1060 390 1115 395 L1115 445 L1060 475 L1005 455Z" fill="#8fb4d8"/>
<path d="M990 345 L1025 350 L1000 470 L895 575 L868 525 L950 465Z" fill="#ece9e2"/>
<path d="M1100 360 L1120 370 L1130 440 L1220 510 L1190 550 L1110 490Z" fill="#eeece6"/>
<path d="M1000 520 L1135 510 L1145 648 H985Z" fill="#e9efef"/>
<rect x="848" y="610" width="248" height="38" rx="4" fill="#eee"/><rect x="855" y="616" width="80" height="32" fill="#aaa"/><rect x="945" y="616" width="82" height="32" fill="#aaa"/>
<rect x="1322" y="70" width="222" height="578" fill="#9a5a26"/>
<path d="M1350 120 L1412 95 Q1418 100 1408 318 L1345 322 Q1338 220 1350 120Z" fill="#8bc4dc"/><rect x="1340" y="200" width="70" height="25" fill="#5b9ec8"/>
<path d="M1500 70 H1544 V310 L1495 315Z" fill="#89c2d9"/><rect x="1495" y="200" width="49" height="25" fill="#5b9ec8"/>
<rect x="1322" y="372" width="222" height="276" fill="#c42c2c"/>
<path d="M1544 280 Q1510 300 1500 370 L1440 510 L1405 600 L1420 648 H1544Z" fill="#c69a83"/>
<path d="M1490 375 L1544 375 V480 H1470Z" fill="#2e4058"/><path d="M1445 490 L1544 480 V545 H1430Z" fill="#5d85b8"/>
<rect x="1338" y="606" width="206" height="42" rx="4" fill="#eee"/><rect x="1343" y="616" width="85" height="32" fill="#b0b0b0"/><rect x="1437" y="616" width="82" height="32" fill="#b0b0b0"/>
</g></svg></div></div>

<div class="card r2" style="left:1227px;top:511px"><svg class="ic"><use href="#img"/></svg><b>Screenshot_202...</b><svg class="kb"><use href="#kb"/></svg>
<div class="th"><svg viewBox="54 21 780 627" preserveAspectRatio="none">
<rect x="96" y="21" width="340" height="430" fill="#e2e2e2"/><rect x="453" y="21" width="340" height="430" fill="#e2e2e2"/>
<g filter="url(#t)">
<path d="M462 21 H528 Q525 34 510 34 H478 Q465 34 462 21Z" fill="#e8401c"/>
<path d="M180 110 Q195 108 205 150 Q255 165 315 150 Q325 110 340 108 Q370 125 382 200 L345 208 L335 255 L338 320 L325 350 L318 290 L280 362 L190 290 L192 210 L150 195 Q160 125 180 110Z" fill="#7096b9"/>
<path d="M205 150 Q255 165 315 150" fill="none" stroke="#5e84a8" stroke-width="3"/><path d="M310 250 L325 320" stroke="#a9c2d8" stroke-width="5"/>
<path d="M583 95 H665 L695 160 Q720 200 715 240 L695 330 L630 355 L555 345 L540 290 L528 210 Q540 175 555 160Z" fill="#6f7f41"/>
<path d="M583 95 L625 160 L665 95 L668 120 L625 185 L582 120Z" fill="#5c6c33"/><path d="M555 150 L600 170 L583 95Z M695 160 L655 180 L665 95Z" fill="#798a49"/>
<path d="M625 170 V352" stroke="#566527" stroke-width="4"/>
<circle cx="385" cy="402" r="29" fill="#f8f8f8"/><path d="M372 392 H396 V415 H372Z M378 392 Q378 384 384 384 Q390 384 390 392" fill="none" stroke="#444" stroke-width="3"/>
<circle cx="743" cy="402" r="29" fill="#f8f8f8"/><path d="M730 392 H754 V415 H730Z M736 392 Q736 384 742 384 Q748 384 748 392" fill="none" stroke="#444" stroke-width="3"/>
<text x="96" y="483" font-size="23" font-weight="700" fill="#444" textLength="103" lengthAdjust="spacingAndGlyphs">RM36.00</text>
<text x="453" y="486" font-size="23" font-weight="700" fill="#e85a45" textLength="103" lengthAdjust="spacingAndGlyphs">RM83.00</text>
<text x="568" y="486" font-size="22" fill="#ccc" textLength="98" lengthAdjust="spacingAndGlyphs" text-decoration="line-through">RM99.00</text>
<text x="96" y="526" font-size="23" fill="#777" textLength="320" lengthAdjust="spacingAndGlyphs">Solid Asymmetrical Hem Dr...</text>
<text x="453" y="526" font-size="23" fill="#777" textLength="321" lengthAdjust="spacingAndGlyphs">Solid Texture Collar Crop Top</text>
<circle cx="122" cy="573" r="24" fill="#fff" stroke="#777" stroke-width="3"/><circle cx="122" cy="573" r="18" fill="#6c8db0"/>
<circle cx="182" cy="573" r="24" fill="#eee"/><circle cx="182" cy="573" r="18" fill="#4a5248"/>
<circle cx="242" cy="573" r="24" fill="#eee"/><circle cx="242" cy="573" r="18" fill="#1d1d1d"/>
<circle cx="478" cy="573" r="24" fill="#fff" stroke="#555" stroke-width="3"/><circle cx="478" cy="573" r="18" fill="#5c6c33"/>
<circle cx="538" cy="573" r="24" fill="#eee"/><circle cx="538" cy="573" r="18" fill="#28344a"/>
<circle cx="598" cy="573" r="24" fill="#eee"/><circle cx="598" cy="573" r="18" fill="#c7573e"/>
<circle cx="660" cy="573" r="24" fill="#eee"/><circle cx="660" cy="573" r="18" fill="#5e8a8c"/>
<rect x="96" y="637" width="340" height="11" fill="#e2e2e2"/><rect x="453" y="637" width="340" height="11" fill="#e2e2e2"/>
</g></svg></div></div>

<!-- ROW 3 -->
<div class="card r3" style="left:20px;top:812px"><svg class="ic"><use href="#img"/></svg><b>Screenshot_202...</b><svg class="kb"><use href="#kb"/></svg></div>
<div class="card r3" style="left:322px;top:812px"><svg class="ic"><use href="#img"/></svg><b>Screenshot_202...</b><svg class="kb"><use href="#kb"/></svg></div>
<div class="card r3" style="left:624px;top:812px;width:281px"><svg class="ic"><use href="#img"/></svg><b>Screenshot_202...</b><svg class="kb"><use href="#kb"/></svg></div>
<div class="card r3" style="left:925px;top:812px"><svg class="ic"><use href="#img"/></svg><b>Screenshot_202...</b><svg class="kb"><use href="#kb"/></svg></div>
<div class="card r3" style="left:1227px;top:812px"><svg class="ic"><use href="#img"/></svg><b>Screenshot_202...</b><svg class="kb"><use href="#kb"/></svg></div>
</div>
<div id="line"></div>
</body></html>
